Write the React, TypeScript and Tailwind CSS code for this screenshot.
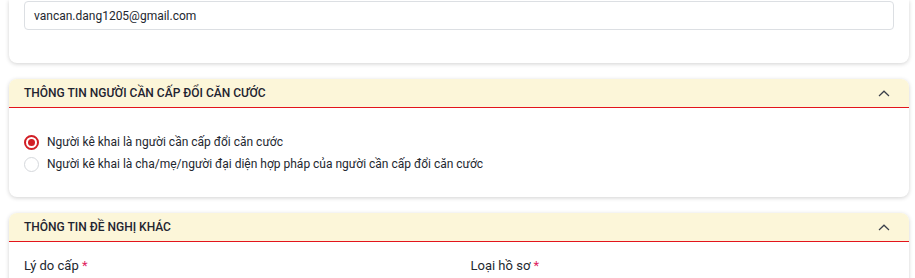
import React from "react";

function ChevronUp() {
  return (
    <svg width="12" height="7" viewBox="0 0 12 7" fill="none" className="shrink-0">
      <path d="M1 6L6 1.2L11 6" stroke="#3a3f4a" strokeWidth="1.2" />
    </svg>
  );
}

function SectionHeader({ title }: { title: string }) {
  return (
    <div>
      <div className="flex h-[28px] items-center justify-between rounded-t-lg bg-[#fcf6d9] pl-[15px] pr-[19px]">
        <span className="text-[12px] font-medium uppercase text-[#1f2430]">{title}</span>
        <ChevronUp />
      </div>
      <div className="h-px bg-[#e3141c]" />
    </div>
  );
}

function Radio({ checked, label }: { checked?: boolean; label: string }) {
  return (
    <label className="flex h-[22px] items-center gap-[8px]">
      <span
        className={
          checked
            ? "flex h-[15px] w-[15px] items-center justify-center rounded-full border-2 border-[#d21f26] bg-white"
            : "flex h-[15px] w-[15px] items-center justify-center rounded-full border border-[#d5d8dc] bg-white"
        }
      >
        {checked ? <span className="h-[7px] w-[7px] rounded-full bg-[#d21f26]" /> : null}
      </span>
      <span className="text-[12px] text-[#23272f]">{label}</span>
    </label>
  );
}

export default function App() {
  return (
    <div className="min-h-[278px] overflow-hidden bg-white pl-[9px] pr-[6px] font-['Roboto',sans-serif] text-[#23272f]">
      <div className="rounded-b-lg bg-white px-[15px] pb-[33px] pt-[1px] shadow-[0_1px_4px_rgba(0,0,0,0.18)]">
        <div className="flex h-[29px] items-center rounded border border-[#dcdfe3] px-[9px] text-[12px] text-[#23272f]">
          vancan.dang1205@gmail.com
        </div>
      </div>

      <div className="mt-[16px] rounded-lg bg-white shadow-[0_1px_4px_rgba(0,0,0,0.18)]">
        <SectionHeader title="Thông tin người cần cấp đổi căn cước" />
        <div className="px-[15px] pb-[22px] pt-[23px]">
          <Radio checked label="Người kê khai là người cần cấp đổi căn cước" />
          <Radio label="Người kê khai là cha/mẹ/người đại diện hợp pháp của người cần cấp đổi căn cước" />
        </div>
      </div>

      <div className="mt-[16px] rounded-lg bg-white shadow-[0_1px_4px_rgba(0,0,0,0.18)]">
        <SectionHeader title="Thông tin đề nghị khác" />
        <div className="grid grid-cols-2 gap-[23px] px-[15px] pt-[15px] pb-[20px]">
          <div>
            <div className="text-[13px] leading-[17px] text-[#23272f]">
              Lý do cấp <span className="text-[#e0245e]">*</span>
            </div>
            <div className="mt-[10px] h-[30px] rounded border border-[#dcdfe3]" />
          </div>
          <div>
            <div className="text-[13px] leading-[17px] text-[#23272f]">
              Loại hồ sơ <span className="text-[#e0245e]">*</span>
            </div>
            <div className="mt-[10px] h-[30px] rounded border border-[#dcdfe3]" />
          </div>
        </div>
      </div>
    </div>
  );
}
